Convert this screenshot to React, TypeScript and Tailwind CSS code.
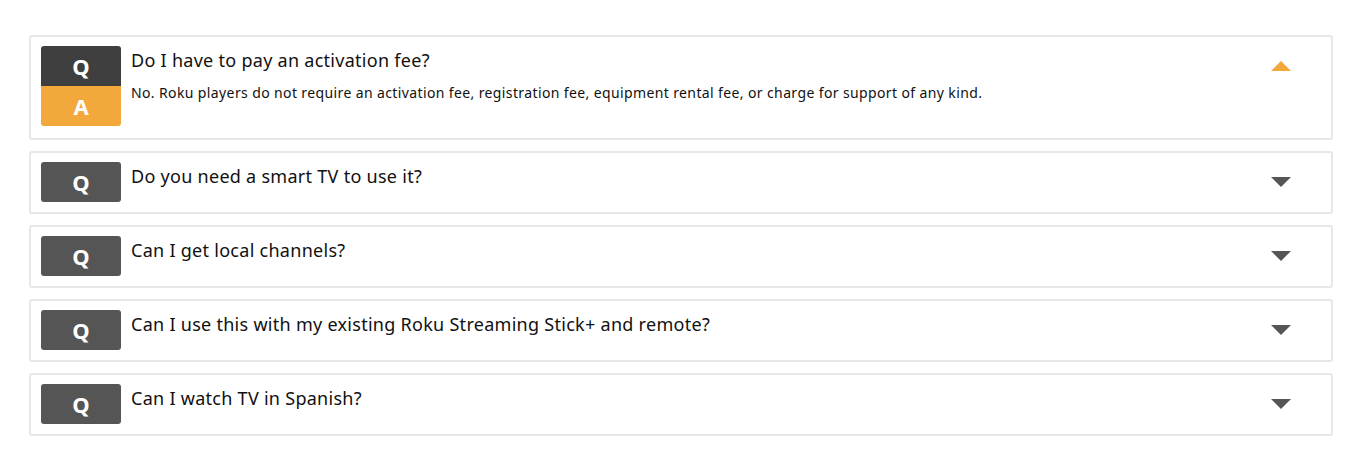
import React from "react";

const items = [
  { q: "Do I have to pay an activation fee?", a: "No. Roku players do not require an activation fee, registration fee, equipment rental fee, or charge for support of any kind.", open: true },
  { q: "Do you need a smart TV to use it?" },
  { q: "Can I get local channels?" },
  { q: "Can I use this with my existing Roku Streaming Stick+ and remote?" },
  { q: "Can I watch TV in Spanish?" },
];

export default function App() {
  return (
    <div className="bg-white min-h-[462px] pt-[35px] pl-[29px] text-[#111111]" style={{ fontFamily: '"Noto Sans", "Open Sans", sans-serif' }}>
      <div className="w-[1304px] flex flex-col gap-[11px]">
        {items.map((it, i) => (
          <div key={i} className={`relative border-2 border-[#e7e7e7] rounded-[3px] pl-[10px] pt-[9px] ${it.open ? "pb-[12px]" : "pb-[10px]"} flex`}>
            <div className="flex flex-col w-[80px] shrink-0">
              <div className={`h-[40px] flex items-center justify-center text-white font-bold text-[22px] ${it.open ? "bg-[#3f3f3f] rounded-t-[3px]" : "bg-[#555555] rounded-[3px]"}`}>Q</div>
              {it.open && (
                <div className="h-[40px] flex items-center justify-center text-white font-bold text-[22px] bg-[#f3a83b] rounded-b-[3px]">A</div>
              )}
            </div>
            <div className="pl-[10px] flex-1">
              <div className="text-[18px] leading-[26px] mt-[1px] tracking-[0.28px]">{it.q}</div>
              {it.a && <div className="text-[14px] leading-[20px] mt-[10px] tracking-[0.38px]">{it.a}</div>}
            </div>
            <div className="absolute right-[40px] top-[24px]">
              {it.open ? (
                <svg width="20" height="10" viewBox="0 0 20 10"><path d="M10 0 L20 10 L0 10 Z" fill="#f3a83b" /></svg>
              ) : (
                <svg width="20" height="10" viewBox="0 0 20 10"><path d="M0 0 L20 0 L10 10 Z" fill="#555555" /></svg>
              )}
            </div>
          </div>
        ))}
      </div>
    </div>
  );
}
